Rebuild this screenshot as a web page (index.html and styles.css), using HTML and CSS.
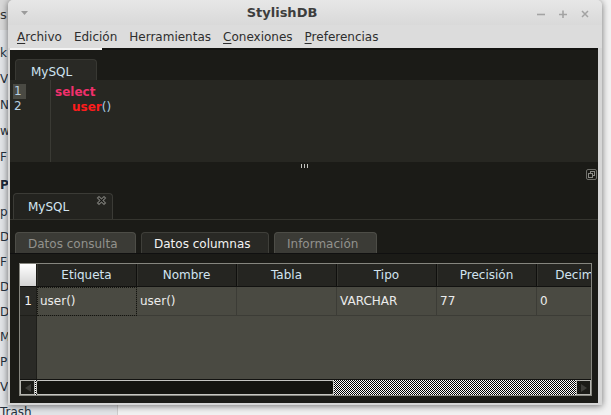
FILE: index.html
```html
<!DOCTYPE html>
<html lang="es">
<head>
<meta charset="utf-8">
<title>StylishDB</title>
<link rel="stylesheet" href="styles.css">
</head>
<body>
<div class="desktop">
  <div class="bgwin">
    <div class="bg-title">s</div>
    <div class="bg-list">
      <div class="bg-item">k</div>
      <div class="bg-item">V</div>
      <div class="bg-item">N</div>
      <div class="bg-item">w</div>
      <div class="bg-item">F</div>
      <div class="bg-head">P</div>
      <div class="bg-item">p</div>
      <div class="bg-item">D</div>
      <div class="bg-item">F</div>
      <div class="bg-item">D</div>
      <div class="bg-item">D</div>
      <div class="bg-item">M</div>
      <div class="bg-item">P</div>
      <div class="bg-item">V</div>
      <div class="bg-item">Trash</div>
    </div>
  </div>

  <div class="window">
    <div class="titlebar">
      <div class="tb-left">
        <svg width="7" height="4" viewBox="0 0 7 4"><path d="M0 0h7L3.5 4z" fill="#9b9b9b"/></svg>
      </div>
      <div class="tb-title">StylishDB</div>
      <div class="tb-controls">
        <span class="tb-btn"><svg width="8" height="8" viewBox="0 0 8 8"><path d="M0 4.5h8" stroke="#a3a3a3" stroke-width="1.6"/></svg></span>
        <span class="tb-btn"><svg width="8" height="8" viewBox="0 0 8 8"><path d="M0 4.5h8M4 0.5v8" stroke="#a3a3a3" stroke-width="1.6"/></svg></span>
        <span class="tb-btn"><svg width="8" height="8" viewBox="0 0 8 8"><path d="M1 1l6 6M7 1l-6 6" stroke="#a3a3a3" stroke-width="1.5"/></svg></span>
      </div>
    </div>

    <div class="menubar">
      <span class="menu-item"><u>A</u>rchivo</span>
      <span class="menu-item">Edición</span>
      <span class="menu-item">Herramientas</span>
      <span class="menu-item"><u>C</u>onexiones</span>
      <span class="menu-item"><u>P</u>referencias</span>
    </div>

    <div class="client">
      <div class="focusbar"><span class="focus-white"></span></div>

      <div class="nb-head">
        <div class="nb-tab">MySQL</div>
      </div>

      <div class="editor">
        <div class="gutter">
          <span class="ln cur">1</span>
          <span class="ln">2</span>
        </div>
        <div class="code">
          <div class="line"><span class="kw">select</span></div>
          <div class="line indent"><span class="fn">user</span><span class="paren">()</span></div>
        </div>
      </div>

      <div class="splitter">
        <span class="grip"></span><span class="grip"></span><span class="grip"></span>
      </div>

      <div class="lower-head">
        <div class="ltab">
          <span class="ltab-label">MySQL</span>
          <svg class="ltab-close" width="11" height="11" viewBox="0 0 11 11"><polygon points="1.5,3 3,1.5 5.5,4 8,1.5 9.5,3 7,5.5 9.5,8 8,9.5 5.5,7 3,9.5 1.5,8 4,5.5" fill="#0e0e0c" stroke="#74746f" stroke-width="1.2"/></svg>
        </div>
        <svg class="restore" width="11" height="11" viewBox="0 0 11 11"><rect x="0.5" y="0.5" width="10" height="10" rx="1.5" fill="none" stroke="#6f6f6a"/><rect x="4.5" y="2.5" width="4" height="4" fill="none" stroke="#8a8a85"/><rect x="2.5" y="4.5" width="4" height="4" fill="#1b1b17" stroke="#8a8a85"/></svg>
      </div>

      <div class="subtabs">
        <div class="stab w1">Datos consulta</div>
        <div class="stab w2 active">Datos columnas</div>
        <div class="stab w3">Información</div>
      </div>

      <div class="panel">
        <div class="table">
          <div class="thead">
            <div class="corner"></div>
            <div class="th">Etiqueta</div>
            <div class="th">Nombre</div>
            <div class="th">Tabla</div>
            <div class="th">Tipo</div>
            <div class="th">Precisión</div>
            <div class="th">Decimales</div>
          </div>
          <div class="trow">
            <div class="rh">1</div>
            <div class="td focus">user()</div>
            <div class="td">user()</div>
            <div class="td"></div>
            <div class="td">VARCHAR</div>
            <div class="td">77</div>
            <div class="td">0</div>
          </div>
          <div class="tfill">
            <div class="rh-fill"></div>
          </div>
          <div class="hscroll">
            <div class="sb-btn">
              <svg width="6" height="8" viewBox="0 0 6 8"><path d="M6 0v8L0 4z" fill="#3e3e3a"/></svg>
            </div>
            <div class="sb-track">
              <div class="sb-thumb"></div>
            </div>
            <div class="sb-btn">
              <svg width="6" height="8" viewBox="0 0 6 8"><path d="M0 0v8l6-4z" fill="#3e3e3a"/></svg>
            </div>
          </div>
        </div>
      </div>
    </div>
  </div>
</div>
</body>
</html>
```

FILE: styles.css
```css
* {
  box-sizing: border-box;
  margin: 0;
  padding: 0;
}

html,
body {
  width: 611px;
  height: 415px;
  overflow: hidden;
}

body {
  background: #f2f2f2;
  font-family: "DejaVu Sans", sans-serif;
  font-size: 12px;
}

.desktop {
  position: relative;
  width: 611px;
  height: 415px;
}

/* background window (file manager sidebar behind) */
.bgwin {
  position: absolute;
  left: 0;
  top: 0;
  width: 118px;
  height: 415px;
  background: #e2e4e7;
  border-right: 1px solid #cdcdcd;
  color: #25313d;
  font-size: 12px;
}

.bg-title {
  height: 30px;
  background: #d8d8d8;
  padding-top: 7px;
  font-size: 13px;
  color: #333;
}

.bg-list {
  padding-top: 10px;
}

.bg-item {
  height: 26px;
  line-height: 26px;
}

.bg-item:nth-child(n+7) {
  height: 25px;
  line-height: 25px;
}

.bg-head {
  height: 30px;
  line-height: 30px;
  font-weight: bold;
  color: #1d2a3a;
}

/* main window */
.window {
  position: absolute;
  left: 8px;
  top: 0;
  width: 594px;
  height: 405px;
  background: #d6d6d6;
  border-radius: 5px 5px 0 0;
  box-shadow: 0 1px 7px rgba(0, 0, 0, 0.55);
  display: flex;
  flex-direction: column;
}

.titlebar {
  height: 25px;
  flex: none;
  display: flex;
  align-items: center;
  background: linear-gradient(#e7e7e7, #d9d9d9);
  border-radius: 5px 5px 0 0;
}

.tb-left {
  width: 32px;
  display: flex;
  justify-content: center;
  padding-top: 1px;
}

.tb-title {
  flex: 1;
  text-align: center;
  font-weight: bold;
  font-size: 13px;
  color: #3d3d3d;
}

.tb-controls {
  width: 78px;
  display: flex;
  justify-content: flex-end;
  padding-right: 6px;
  padding-top: 2px;
}

.tb-btn {
  width: 22px;
  display: flex;
  justify-content: center;
}

.menubar {
  height: 23px;
  flex: none;
  display: flex;
  align-items: center;
  padding-left: 3px;
  background: #dcdcdc;
  color: #2e2e2e;
}

.menu-item {
  padding: 0 6px;
}

.menu-item u {
  text-decoration-thickness: 1px;
  text-underline-offset: 2px;
}

/* client area */
.client {
  flex: 1;
  margin: 0 4px 2px 2px;
  background: #1b1b17;
  display: flex;
  flex-direction: column;
  overflow: hidden;
}

.focusbar {
  height: 2px;
  flex: none;
  background: #121210;
  display: flex;
}

.focus-white {
  width: 92px;
  background: #f4f4f4;
}

.nb-head {
  height: 30px;
  flex: none;
  display: flex;
  align-items: flex-end;
  padding-left: 5px;
}

.nb-tab {
  width: 82px;
  height: 21px;
  padding: 3px 0 0 15px;
  display: flex;
  align-items: center;
  background: #292925;
  border: 1px solid #383833;
  border-bottom: none;
  border-radius: 4px 4px 0 0;
  color: #cfe4f2;
}

.editor {
  height: 82px;
  flex: none;
  display: flex;
  background: #272722;
}

.gutter {
  width: 41px;
  border-right: 1px solid #3a3a34;
  padding: 4px 0 0 3px;
}

.ln {
  display: block;
  width: 13px;
  height: 15px;
  line-height: 15px;
  padding-left: 1px;
  color: #b7d0e1;
}

.ln.cur {
  background: #4a4a43;
}

.code {
  padding: 5px 0 0 4px;
  font-weight: bold;
}

.line {
  height: 15px;
  line-height: 15px;
}

.indent {
  padding-left: 17px;
}

.kw {
  color: #f0306c;
}

.fn {
  color: #ff1c1c;
}

.paren {
  color: #a9cde3;
  font-weight: normal;
}

.splitter {
  height: 8px;
  flex: none;
  display: flex;
  justify-content: center;
  gap: 2px;
  padding-top: 2px;
}

.grip {
  width: 1px;
  height: 4px;
  background: #c4c4c0;
}

.lower-head {
  height: 50px;
  flex: none;
  display: flex;
  justify-content: space-between;
  padding: 0 1px 0 3px;
  border-bottom: 1px solid #35352f;
}

.ltab {
  align-self: flex-end;
  width: 100px;
  height: 26px;
  display: flex;
  justify-content: space-between;
  padding: 0 5px 0 14px;
  background: #23231f;
  border: 1px solid #3b3b36;
  border-bottom: none;
  border-radius: 4px 4px 0 0;
  color: #d3e6f2;
}

.ltab-label {
  align-self: center;
  padding-top: 1px;
}

.ltab-close {
  margin-top: 1px;
}

.restore {
  margin-top: -1px;
}

.subtabs {
  height: 34px;
  flex: none;
  display: flex;
  align-items: flex-end;
  gap: 5px;
  padding-left: 5px;
  border-bottom: 1px solid #101010;
}

.stab {
  height: 21px;
  padding: 1px 0 0 12px;
  display: flex;
  align-items: center;
  background: #3b3b36;
  border: 1px solid #4d4d47;
  border-bottom: none;
  border-radius: 4px 4px 0 0;
  color: #92928d;
}

.stab.w1 {
  width: 121px;
}

.stab.w2 {
  width: 128px;
}

.stab.w3 {
  width: 103px;
}

.stab.active {
  background: #292925;
  border-color: #3f3f3a;
  color: #f3f3f3;
}

.panel {
  flex: 1;
  padding: 9px 6px 7px 9px;
  display: flex;
  flex-direction: column;
}

.table {
  flex: 1;
  display: flex;
  flex-direction: column;
  border: 1px solid #86867f;
  background: #4a4a42;
  overflow: hidden;
}

.thead {
  height: 23px;
  flex: none;
  display: flex;
  background: #252521;
  border-bottom: 1px solid #121210;
}

.corner {
  width: 17px;
  flex: none;
  border-right: 1px solid #1a1a16;
  background: linear-gradient(#ffffff, #d3d3d3);
}

.th {
  width: 100px;
  flex: none;
  border-right: 1px solid #0f0f0d;
  box-shadow: inset 1px 0 #34342f;
  text-align: center;
  line-height: 22px;
  color: #d2e4f0;
  white-space: nowrap;
}

.trow {
  height: 29px;
  flex: none;
  display: flex;
}

.rh {
  width: 17px;
  flex: none;
  background: #2a2a26;
  border-right: 1px solid #1e1e1a;
  border-bottom: 1px solid #1e1e1a;
  color: #f4f4f4;
  text-align: center;
  line-height: 28px;
}

.td {
  width: 100px;
  flex: none;
  padding-left: 3px;
  border-right: 1px solid #3c3c36;
  border-bottom: 1px solid #3c3c36;
  line-height: 28px;
  color: #ececec;
  white-space: nowrap;
}

.td.focus {
  outline: 1px dotted #14140f;
  outline-offset: -1px;
}

.tfill {
  flex: 1;
  display: flex;
}

.rh-fill {
  width: 17px;
  background: #2a2a26;
  border-right: 1px solid #1e1e1a;
}

.hscroll {
  height: 16px;
  flex: none;
  display: flex;
  border-top: 1px solid #121210;
  background: #1b1b17;
}

.sb-btn {
  width: 15px;
  flex: none;
  display: flex;
  align-items: center;
  justify-content: center;
  background: #1b1b17;
  border: 1px solid #b6b6b1;
}

.sb-track {
  flex: 1;
  background: repeating-conic-gradient(#000 0% 25%, #fff 0% 50%) 0 0 / 2px 2px;
}

.sb-thumb {
  width: 298px;
  height: 100%;
  margin-left: 1px;
  background: #14140f;
  border: 1px solid #c6c6c1;
  border-radius: 2px;
}
```
